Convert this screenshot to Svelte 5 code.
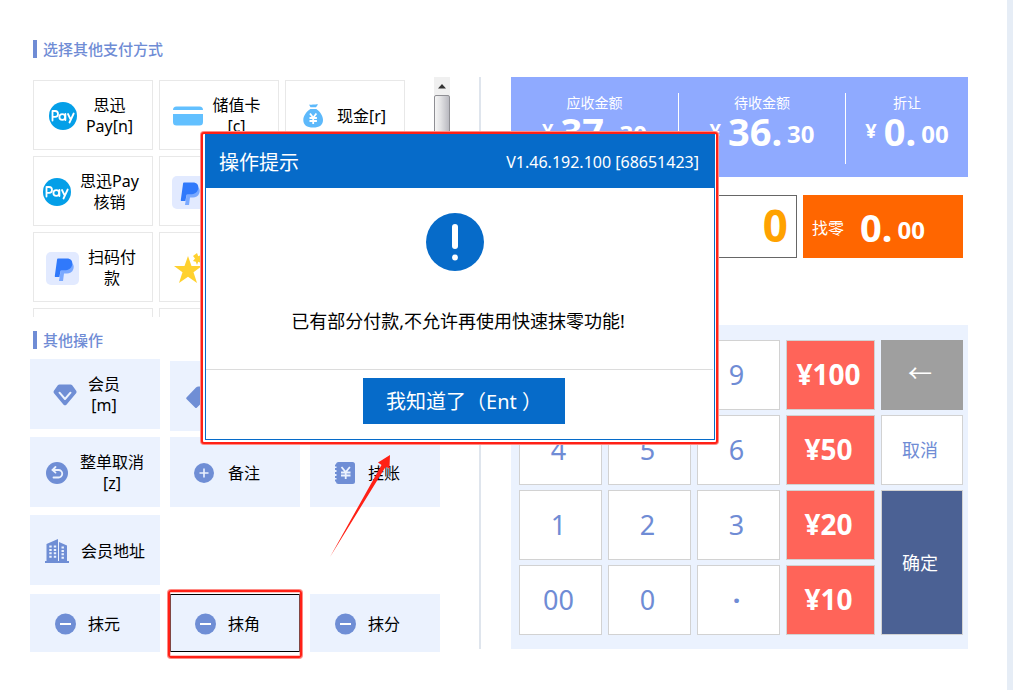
<script>
  const payments = [
    { icon: 'pay', label: '思迅\nPay[n]' },
    { icon: 'card', label: '储值卡\n[c]' },
    { icon: 'cash', label: '现金[r]' },
    { icon: 'pay', label: '思迅Pay\n核销' },
    { icon: 'paypal' },
    {},
    { icon: 'paypal', label: '扫码付\n款' },
    { icon: 'star' },
    {},
    {},
    {},
    {}
  ];
  const operations = [
    { icon: 'gem', label: '会员\n[m]', short: true },
    { icon: 'tag', low: true },
    { low: true },
    { icon: 'undo', label: '整单取消\n[z]' },
    { icon: 'plus', label: '备注', short: true },
    { icon: 'book', label: '挂账', short: true },
    { icon: 'building', label: '会员地址' }
  ];
  const roundings = ['抹元', '抹角', '抹分'];
  const totals = [
    { label: '应收金额', whole: '37.', cents: '30' },
    { label: '待收金额', whole: '36.', cents: '30' },
    { label: '折让', whole: '0.', cents: '00' }
  ];
  const keys = [
    { t: '7' }, { t: '8' }, { t: '9' }, { t: '¥100', c: 'cash' }, { t: '←', c: 'back' },
    { t: '4' }, { t: '5' }, { t: '6' }, { t: '¥50', c: 'cash' }, { t: '取消', c: 'word' },
    { t: '1' }, { t: '2' }, { t: '3' }, { t: '¥20', c: 'cash' }, { t: '确定', c: 'confirm' },
    { t: '00' }, { t: '0' }, { t: '·', c: 'dot' }, { t: '¥10', c: 'cash' }
  ];
  let selected = $state('抹角');
</script>

{#snippet glyph(name)}
  {#if name === 'pay'}
    <svg width="28" height="28" viewBox="0 0 28 28"><circle cx="14" cy="14" r="14" fill="#049fe8" /><g fill="none" stroke="#fff" stroke-width="1.8" stroke-linecap="round" stroke-linejoin="round"><path d="M3.5 18.5V9h2.600a2.900 2.900 0 0 1 0 5.800H3.800" /><circle cx="13.300" cy="15" r="2.900" /><path d="M16.400 12v6M19 12l2.700 5.600M24.700 11.500l-4.200 9" /></g></svg>
  {:else if name === 'card'}
    <svg width="30" height="20" viewBox="0 0 30 20"><path d="M0 4a3.500 3.500 0 0 1 3.500-3.500h23A3.500 3.500 0 0 1 30 4zM0 8h30v8a3.500 3.500 0 0 1-3.500 3.500h-23A3.500 3.500 0 0 1 0 16z" fill="#62c0ff" /></svg>
  {:else if name === 'cash'}
    <svg width="28" height="24" viewBox="-3 0 28 24"><path d="M6 .5c2 .9 3-.4 4.500 0s2.500-.6 4.500 0l-2 2.700H7.500zM7.300 5h6c3.500 2.300 6.700 6.500 6.700 11 0 5-3.500 7.500-9.800 7.500S.3 21 .3 16c0-4.500 3.500-8.700 7-11z" fill="#5db9fb" /><path d="M7 9.500l3.200 4.200 3.200-4.200M6.500 14h7.400M6.500 17h7.400M10.200 14v6" fill="none" stroke="#fff" stroke-width="1.800" /></svg>
  {:else if name === 'paypal'}
    <svg width="33" height="33" viewBox="0 0 33 33"><rect width="33" height="33" rx="5" fill="#e2eaff" /><path d="M16 10h8c3.200 1 4.500 4 3.300 7.200-1 3-3.700 4.300-6.300 4.300h-3l-1 7.500h-4z" fill="#7aa9ff" /><path d="M12.300 6.500h8.500c4.200 0 6.200 2.500 5.300 6.500-.9 3.700-3.600 5.300-7.600 5.300h-2.700c-.8 0-1.200.5-1.400 1.300l-1 5.400H9.700c-.7 0-1-.4-.9-1.100l2.200-16c.1-.9.500-1.400 1.300-1.400z" fill="#3079fb" /></svg>
  {:else if name === 'star'}
    <svg width="33" height="32" viewBox="0 0 33 32"><path d="M16 4l3.500 10H30l-8.500 6.300L25 31l-9-6.300L7 31l3.500-10.700L2 14h10.500zM25 1l1.200 3.200L29 3l-1.200 2.800L31 7l-3.200 1.200L29 11l-2.800-1.200L25 13l-1.200-3.200L21 9l2-2.500L21 4z" fill="#ffd12f" /></svg>
  {:else if name === 'gem'}
    <svg width="22" height="22" viewBox="0 0 22 22"><path d="M5.500.5h11q1 0 1.700.8l4 5.500q.9 1.200-.1 2.400l-9.700 11.500q-1.400 1.300-2.800 0L0 9.200q-1-1.200-.1-2.400l3.900-5.500Q4.500.5 5.500.5z" fill="#6f8ed5" /><path d="M5.500 8.700l5.500 6.300 5.500-6.300" fill="none" stroke="#ebf2fe" stroke-width="2" stroke-linecap="round" stroke-linejoin="round" /></svg>
  {:else if name === 'tag'}
    <svg width="22" height="22" viewBox="0 0 22 22"><path d="M.5 11.500L10 1.500Q11 .5 12.500.5H20q1.500 0 1.500 1.500v8q0 1-1 2L11 21.500q-1 1-2 0l-8.500-8.500q-.8-.8 0-1.500z" fill="#6f8ed5" /><circle cx="16.500" cy="6" r="2" fill="#ebf2fe" /></svg>
  {:else if name === 'undo'}
    <svg width="22" height="22" viewBox="0 0 22 22"><circle cx="11" cy="11" r="11" fill="#6f8ed5" /><path d="M9.500 5L6.500 8l3 2.600M7 8h5.500a3.600 3.600 0 0 1 0 7.500H7.500" fill="none" stroke="#ebf2fe" stroke-width="1.800" stroke-linecap="round" /></svg>
  {:else if name === 'plus'}
    <svg width="22" height="22" viewBox="0 0 22 22"><circle cx="10" cy="11" r="10" fill="#6f8ed5" /><path d="M5.500 11h9M10 6.500v9" stroke="#ebf2fe" stroke-width="1.600" /></svg>
  {:else if name === 'book'}
    <svg width="22" height="22" viewBox="0 0 22 22"><rect x="2" y="0" width="19" height="22" rx="2.500" fill="#6f8ed5" /><path d="M1 5h2M1 9h2M1 13h2M1 17h2" stroke="#ebf2fe" stroke-width="1" /><path d="M1 3.500h2M1 7h2M1 11h2M1 15h2M1 18.500h2" stroke="#6f8ed5" stroke-width="1.800" /><path d="M7.500 5l4.200 5 4.200-5M7 10.500h9.500M7 13.500h9.500M11.700 10v7" fill="none" stroke="#ebf2fe" stroke-width="1.800" /></svg>
  {:else if name === 'building'}
    <svg width="24" height="24" viewBox="0 0 24 24"><path d="M0 22h1.500V5L13 0v22h1V3l8 3.500V22h2v2H0z" fill="#6f8ed5" /><path d="M5.500 6.500V20M10 6.500V20M17.700 7.500V20" stroke="#ebf2fe" stroke-width="2.400" stroke-dasharray="2 1.400" /></svg>
  {:else if name === 'minus'}
    <svg width="22" height="22" viewBox="0 0 22 22"><circle cx="11.500" cy="11" r="10.500" fill="#6f8ed5" /><path d="M6 11h11" stroke="#fff" stroke-width="2" /></svg>
  {/if}
{/snippet}

<main class="page">
  <section class="left">
    <h2>选择其他支付方式</h2>
    <div class="scroller">
      <div class="payments">
        {#each payments as p}
          {#if p.label}
            <button class="pay-card">{@render glyph(p.icon)}<span>{p.label}</span></button>
          {:else}
            <div class="pay-card bare">{@render glyph(p.icon)}</div>
          {/if}
        {/each}
      </div>
      <div class="bar"><div class="bar-top"><svg width="8" height="5" viewBox="0 0 8 5"><path d="M4 0l4 4.500H0z" fill="#333" /></svg></div><div class="thumb"></div></div>
    </div>
    <h2>其他操作</h2>
    <div class="operations">
      {#each operations as o}
        {#if o.label}
          <button class="op" class:short={o.short}>{@render glyph(o.icon)}<span>{o.label}</span></button>
        {:else}
          <div class="op bare" class:low={o.low}>{@render glyph(o.icon)}</div>
        {/if}
      {/each}
    </div>
    <div class="roundings">
      {#each roundings as r}
        <button class="op short" class:selected={selected === r} onclick={() => (selected = r)}>{@render glyph('minus')}<span>{r}</span></button>
      {/each}
    </div>
  </section>

  <section class="right">
    <div class="totals">
      {#each totals as t}
        <div class="total">
          <span class="caption">{t.label}</span>
          <span class="amount"><i>¥</i><b>{t.whole}</b><strong>{t.cents}</strong></span>
        </div>
      {/each}
    </div>
    <div class="entry">
      <input aria-label="0" value="0" />
      <div class="change"><span>找零</span><p class="amount"><b>0.</b><strong>00</strong></p></div>
    </div>
    <div class="keypad">
      {#each keys as k}
        <button class="key {k.c ?? ''}">{k.t}</button>
      {/each}
    </div>
  </section>

  <div class="frame">
    <div class="dialog" role="dialog" aria-labelledby="dialog-title">
      <header><h1 id="dialog-title">操作提示</h1><span>V1.46.192.100 [68651423]</span></header>
      <div class="message">
        <svg width="58" height="58" viewBox="0 0 58 58"><circle cx="29" cy="29" r="29" fill="#066bc9" /><path d="M29 14v19" stroke="#fff" stroke-width="6" stroke-linecap="round" /><circle cx="29" cy="44.500" r="2.900" fill="#fff" /></svg>
        <p>已有部分付款,不允许再使用快速抹零功能!</p>
      </div>
      <footer><button>我知道了（Ent ）</button></footer>
    </div>
  </div>
  <svg class="arrow" width="64" height="106" viewBox="0 0 64 106"><path d="M1 105L52.500 13l-3.500-2.500L61 3l-.5 13.500L56.500 15z" fill="#ff2116" /></svg>
</main>

<style>
  :global(body) { margin: 0; background: #fff; }
  .page {
    position: relative;
    box-sizing: border-box;
    min-height: 100vh;
    display: flex;
    gap: 30px;
    padding: 40px 39px 32px 30px;
    border-right: 6px solid #e6edf6;
    font-family: "Noto Sans", "Noto Sans CJK SC", sans-serif;
    font-size: 16px;
    color: #000;
  }
  button, input { font: inherit; color: inherit; margin: 0; padding: 0; border: 0; border-radius: 0; box-sizing: border-box; }
  svg { flex: none; display: block; overflow: visible; }
  h1, h2, p { margin: 0; font-weight: 400; }
  .left { flex: 0 1 451px; display: flex; flex-direction: column; position: relative; }
  .left::after { content: ""; position: absolute; right: 0; top: 37px; bottom: 9px; width: 2px; background: #dfe5ed; }
  h2 {
    margin-left: 3px;
    padding-left: 6px;
    border-left: 4px solid #6f8cd5;
    font-size: 15px;
    line-height: 18px;
    font-weight: 500;
    color: #6f8cd5;
  }
  .scroller { display: flex; justify-content: space-between; height: 240px; margin: 19px 31px 14px 3px; overflow: hidden; }
  .payments { display: grid; grid-template-columns: repeat(3, 120px); grid-auto-rows: 70px; gap: 6px; padding-top: 3px; }
  .pay-card {
    box-sizing: border-box;
    display: flex;
    align-items: center;
    justify-content: center;
    gap: 9px;
    padding: 2px 4px 0 0;
    border: 1px solid #e8e8e8;
    background: #fff;
    line-height: 21px;
    white-space: pre-line;
  }
  .pay-card.bare { justify-content: flex-start; padding-left: 12px; }
  .bar { width: 16px; display: flex; flex-direction: column; background: #f0f0f0; }
  .bar-top { height: 18px; display: grid; place-items: center; }
  .thumb { height: 80px; border: 1px solid #8f8f94; border-radius: 2px; background: linear-gradient(90deg, #f5f5f5, #e2e2e4 40%, #b9b9c0); }
  .operations { display: grid; grid-template-columns: repeat(3, 130px); grid-auto-rows: 70px; gap: 8px 10px; margin-top: 10px; }
  .roundings { display: grid; grid-template-columns: repeat(3, 130px); grid-auto-rows: 58px; gap: 10px; margin-top: 9px; }
  .op {
    box-sizing: border-box;
    position: relative;
    display: flex;
    align-items: center;
    justify-content: center;
    gap: 12px;
    padding-top: 2px;
    background: #ebf2fe;
    line-height: 21px;
    white-space: pre-line;
  }
  .op.short { padding-right: 16px; }
  .op.bare { justify-content: flex-start; padding-left: 16px; }
  .op.low { margin: 2px 0 -2px; }
  .op.selected { box-shadow: inset 0 0 0 1px #000; }
  .op.selected::after {
    content: "";
    position: absolute;
    inset: -4px -2px -6px;
    border: 2px solid #ff2116;
    border-radius: 3px;
    box-shadow: 0 0 0 1px #ff8c86, inset 0 0 0 1px #ff8c8680;
  }
  .right { flex: 1; min-width: 0; padding-top: 37px; }
  .totals { display: grid; grid-template-columns: 167fr 167fr 123fr; height: 100px; padding: 16px 0 13px; box-sizing: border-box; background: #8faaff; color: #fff; }
  .total { display: flex; flex-direction: column; align-items: center; padding-top: 1px; }
  .total + .total { border-left: 1px solid #fff; }
  .caption { font-size: 14px; line-height: 18px; }
  .amount { display: flex; align-items: flex-end; line-height: 38px; }
  .amount i { margin-right: 7px; font-size: 20px; font-style: normal; font-weight: 700; }
  b { font-size: 38px; font-weight: 700; }
  strong { margin-left: 5px; font-size: 24px; font-weight: 700; line-height: 32px; }
  .entry { display: flex; gap: 6px; height: 63px; margin: 18px 5px 0 0; }
  input { flex: 1; min-width: 0; padding: 0 8px 3px; border: 1px solid #666; text-align: right; font-size: 44px; font-weight: 700; color: #ffa200; background: #fff; }
  .change { flex: 0 0 160px; box-sizing: border-box; display: flex; align-items: center; gap: 16px; padding-left: 9px; background: #f60; color: #fff; }
  .keypad {
    display: grid;
    grid-template-columns: 83fr 83fr 83fr 89fr 82fr;
    grid-auto-rows: 70px;
    gap: 5px 6px;
    margin-top: 67px;
    padding: 15px 5px 14px 8px;
    background: #ebf2fe;
  }
  .key { padding: 0 4px 2px 0; border: 1px solid #d2d2d2; background: #fff; color: #6f8cd5; font-size: 27px; }
  .key.cash { background: #ff6459; color: #fff; font-size: 28px; font-weight: 700; }
  .key.back { padding-bottom: 8px; border-color: #9f9f9f; background: #9f9f9f; color: #fff; font-family: "Noto Sans CJK SC", sans-serif; font-size: 24px; }
  .key.word { font-size: 18px; }
  .key.dot { font-weight: 700; }
  .key.confirm { grid-row: span 2; background: #4b6194; color: #fff; font-size: 18px; }
  .frame {
    position: absolute;
    left: 201px;
    top: 132px;
    width: 517px;
    box-sizing: border-box;
    padding: 0 1px 2px 2px;
    border: 2px solid #ff2116;
    border-radius: 3px;
    box-shadow: 0 0 0 1px #ff8c86;
    background: #fff;
  }
  .dialog { border: 1px solid #066bc9; background: #fff; }
  header { display: flex; align-items: center; justify-content: space-between; height: 53px; padding: 0 15px 0 13px; background: #066bc9; color: #fff; }
  h1 { font-size: 20px; }
  .message { display: flex; flex-direction: column; align-items: center; gap: 37px; height: 181px; box-sizing: border-box; padding: 25px 10px 0 0; }
  .message p { padding-left: 6px; font-size: 18px; line-height: 26px; }
  footer { display: flex; justify-content: center; height: 70px; box-sizing: border-box; margin-right: 1px; padding: 8px 0 0 9px; border-top: 1px solid #dcdcdc; }
  footer button { width: 202px; height: 46px; padding-bottom: 2px; background: #066bc9; color: #fff; font-size: 20px; }
  .arrow { position: absolute; left: 329px; top: 452px; }
</style>
